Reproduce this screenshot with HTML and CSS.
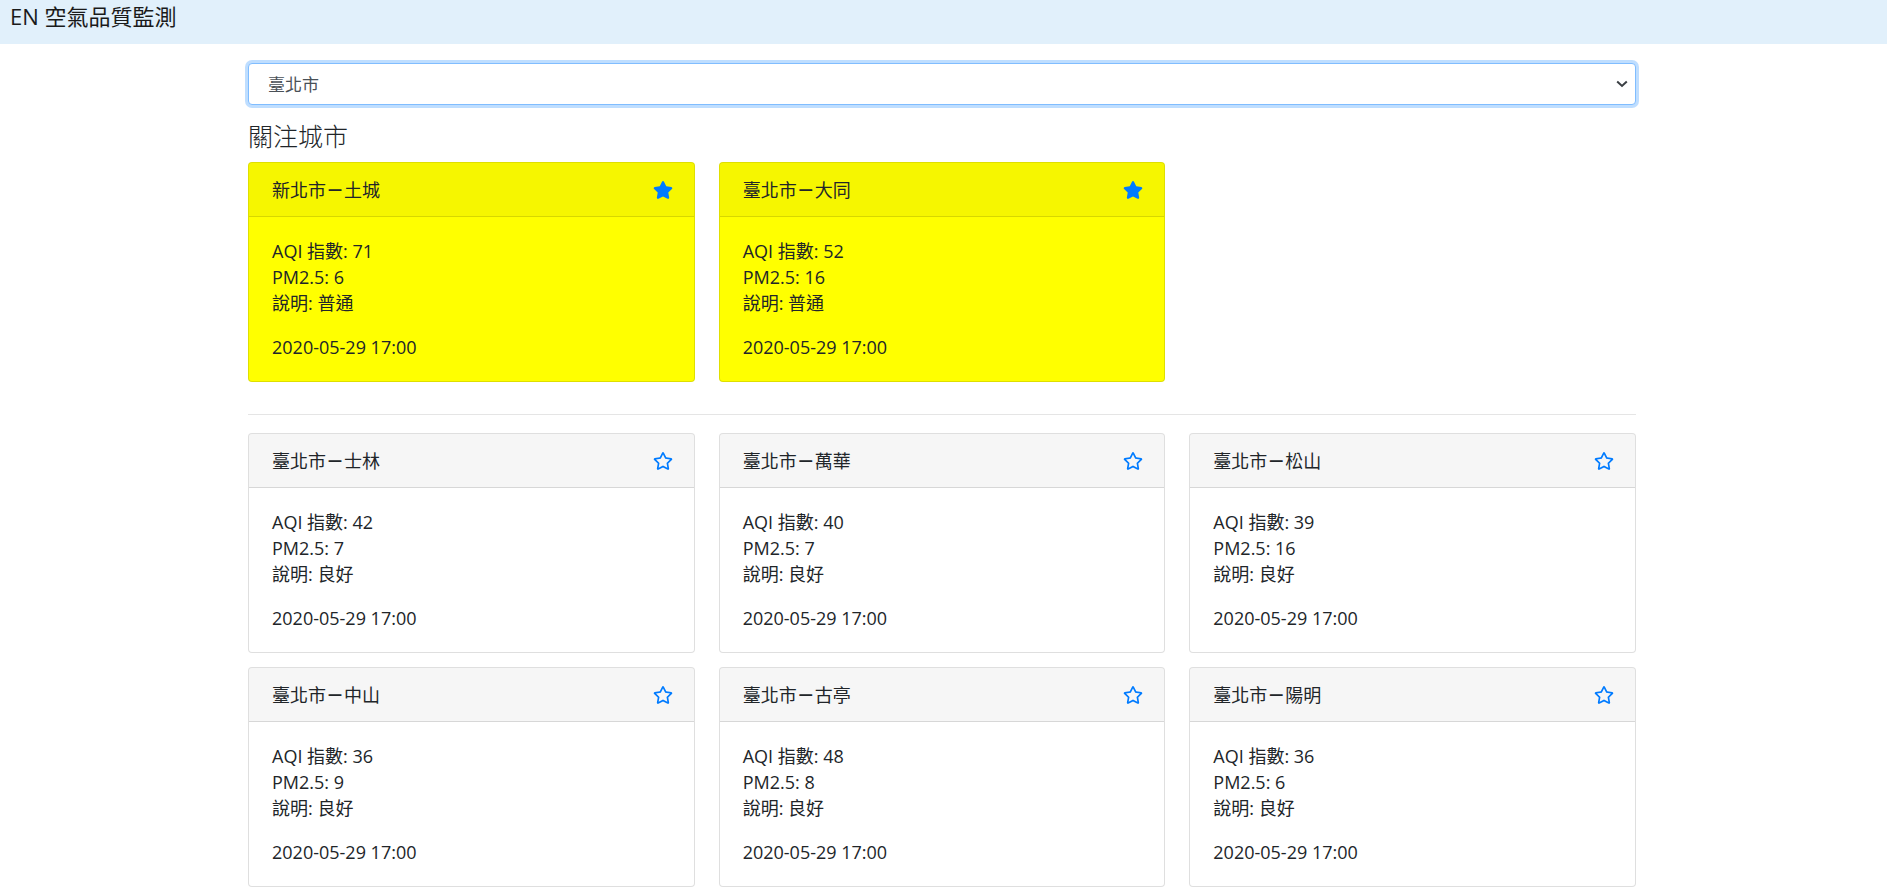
FILE: index.html
```html
<!DOCTYPE html>
<html lang="zh-Hant">
<head>
<meta charset="utf-8">
<title>空氣品質監測</title>
<link rel="stylesheet" href="styles.css">
</head>
<body>
<header class="navbar">EN 空氣品質監測</header>
<main class="container">
  <div class="select-wrap">
    <select class="city-select">
      <option>臺北市</option>
      <option>新北市</option>
    </select>
    <svg class="chevron" width="12" height="8" viewBox="0 0 12 8"><polyline points="1.2,1.5 6,6 10.8,1.5" fill="none" stroke="#3a3f44" stroke-width="2"/></svg>
  </div>
  <h2 class="section-title">關注城市</h2>
  <div class="card-grid">
    <div class="card card-fav">
      <div class="card-header"><span>新北市<span class="dash">－</span>土城</span><svg class="star" viewBox="0 0 576 512"><path d="M259.3 17.8L194 150.2 47.9 171.5c-26.2 3.8-36.7 36.1-17.7 54.6l105.7 103-25 145.5c-4.5 26.3 23.2 46 46.4 33.7L288 439.6l130.7 68.7c23.2 12.2 50.9-7.4 46.4-33.7l-25-145.5 105.7-103c19-18.5 8.5-50.8-17.7-54.6L382 150.2 316.7 17.8c-11.7-23.6-45.6-23.9-57.4 0z"/></svg></div>
      <div class="card-body">
        <p>AQI 指數: 71<br>PM2.5: 6<br>說明: 普通</p>
        <p>2020-05-29 17:00</p>
      </div>
    </div>
    <div class="card card-fav">
      <div class="card-header"><span>臺北市<span class="dash">－</span>大同</span><svg class="star" viewBox="0 0 576 512"><path d="M259.3 17.8L194 150.2 47.9 171.5c-26.2 3.8-36.7 36.1-17.7 54.6l105.7 103-25 145.5c-4.5 26.3 23.2 46 46.4 33.7L288 439.6l130.7 68.7c23.2 12.2 50.9-7.4 46.4-33.7l-25-145.5 105.7-103c19-18.5 8.5-50.8-17.7-54.6L382 150.2 316.7 17.8c-11.7-23.6-45.6-23.9-57.4 0z"/></svg></div>
      <div class="card-body">
        <p>AQI 指數: 52<br>PM2.5: 16<br>說明: 普通</p>
        <p>2020-05-29 17:00</p>
      </div>
    </div>
  </div>
  <hr class="divider">
  <div class="card-grid">
    <div class="card">
      <div class="card-header"><span>臺北市<span class="dash">－</span>士林</span><svg class="star" viewBox="0 0 576 512"><path d="M528.1 171.5L382 150.2 316.7 17.8c-11.7-23.6-45.6-23.9-57.4 0L194 150.2 47.9 171.5c-26.2 3.8-36.7 36.1-17.7 54.6l105.7 103-25 145.5c-4.5 26.3 23.2 46 46.4 33.7L288 439.6l130.7 68.7c23.2 12.2 50.9-7.4 46.4-33.7l-25-145.5 105.7-103c19-18.5 8.5-50.8-17.7-54.6zM388.6 312.3l23.7 138.4L288 385.4l-124.3 65.3 23.7-138.4-100.6-98 139-20.2 62.2-126 62.2 126 139 20.2-100.6 98z"/></svg></div>
      <div class="card-body">
        <p>AQI 指數: 42<br>PM2.5: 7<br>說明: 良好</p>
        <p>2020-05-29 17:00</p>
      </div>
    </div>
    <div class="card">
      <div class="card-header"><span>臺北市<span class="dash">－</span>萬華</span><svg class="star" viewBox="0 0 576 512"><path d="M528.1 171.5L382 150.2 316.7 17.8c-11.7-23.6-45.6-23.9-57.4 0L194 150.2 47.9 171.5c-26.2 3.8-36.7 36.1-17.7 54.6l105.7 103-25 145.5c-4.5 26.3 23.2 46 46.4 33.7L288 439.6l130.7 68.7c23.2 12.2 50.9-7.4 46.4-33.7l-25-145.5 105.7-103c19-18.5 8.5-50.8-17.7-54.6zM388.6 312.3l23.7 138.4L288 385.4l-124.3 65.3 23.7-138.4-100.6-98 139-20.2 62.2-126 62.2 126 139 20.2-100.6 98z"/></svg></div>
      <div class="card-body">
        <p>AQI 指數: 40<br>PM2.5: 7<br>說明: 良好</p>
        <p>2020-05-29 17:00</p>
      </div>
    </div>
    <div class="card">
      <div class="card-header"><span>臺北市<span class="dash">－</span>松山</span><svg class="star" viewBox="0 0 576 512"><path d="M528.1 171.5L382 150.2 316.7 17.8c-11.7-23.6-45.6-23.9-57.4 0L194 150.2 47.9 171.5c-26.2 3.8-36.7 36.1-17.7 54.6l105.7 103-25 145.5c-4.5 26.3 23.2 46 46.4 33.7L288 439.6l130.7 68.7c23.2 12.2 50.9-7.4 46.4-33.7l-25-145.5 105.7-103c19-18.5 8.5-50.8-17.7-54.6zM388.6 312.3l23.7 138.4L288 385.4l-124.3 65.3 23.7-138.4-100.6-98 139-20.2 62.2-126 62.2 126 139 20.2-100.6 98z"/></svg></div>
      <div class="card-body">
        <p>AQI 指數: 39<br>PM2.5: 16<br>說明: 良好</p>
        <p>2020-05-29 17:00</p>
      </div>
    </div>
    <div class="card">
      <div class="card-header"><span>臺北市<span class="dash">－</span>中山</span><svg class="star" viewBox="0 0 576 512"><path d="M528.1 171.5L382 150.2 316.7 17.8c-11.7-23.6-45.6-23.9-57.4 0L194 150.2 47.9 171.5c-26.2 3.8-36.7 36.1-17.7 54.6l105.7 103-25 145.5c-4.5 26.3 23.2 46 46.4 33.7L288 439.6l130.7 68.7c23.2 12.2 50.9-7.4 46.4-33.7l-25-145.5 105.7-103c19-18.5 8.5-50.8-17.7-54.6zM388.6 312.3l23.7 138.4L288 385.4l-124.3 65.3 23.7-138.4-100.6-98 139-20.2 62.2-126 62.2 126 139 20.2-100.6 98z"/></svg></div>
      <div class="card-body">
        <p>AQI 指數: 36<br>PM2.5: 9<br>說明: 良好</p>
        <p>2020-05-29 17:00</p>
      </div>
    </div>
    <div class="card">
      <div class="card-header"><span>臺北市<span class="dash">－</span>古亭</span><svg class="star" viewBox="0 0 576 512"><path d="M528.1 171.5L382 150.2 316.7 17.8c-11.7-23.6-45.6-23.9-57.4 0L194 150.2 47.9 171.5c-26.2 3.8-36.7 36.1-17.7 54.6l105.7 103-25 145.5c-4.5 26.3 23.2 46 46.4 33.7L288 439.6l130.7 68.7c23.2 12.2 50.9-7.4 46.4-33.7l-25-145.5 105.7-103c19-18.5 8.5-50.8-17.7-54.6zM388.6 312.3l23.7 138.4L288 385.4l-124.3 65.3 23.7-138.4-100.6-98 139-20.2 62.2-126 62.2 126 139 20.2-100.6 98z"/></svg></div>
      <div class="card-body">
        <p>AQI 指數: 48<br>PM2.5: 8<br>說明: 良好</p>
        <p>2020-05-29 17:00</p>
      </div>
    </div>
    <div class="card">
      <div class="card-header"><span>臺北市<span class="dash">－</span>陽明</span><svg class="star" viewBox="0 0 576 512"><path d="M528.1 171.5L382 150.2 316.7 17.8c-11.7-23.6-45.6-23.9-57.4 0L194 150.2 47.9 171.5c-26.2 3.8-36.7 36.1-17.7 54.6l105.7 103-25 145.5c-4.5 26.3 23.2 46 46.4 33.7L288 439.6l130.7 68.7c23.2 12.2 50.9-7.4 46.4-33.7l-25-145.5 105.7-103c19-18.5 8.5-50.8-17.7-54.6zM388.6 312.3l23.7 138.4L288 385.4l-124.3 65.3 23.7-138.4-100.6-98 139-20.2 62.2-126 62.2 126 139 20.2-100.6 98z"/></svg></div>
      <div class="card-body">
        <p>AQI 指數: 36<br>PM2.5: 6<br>說明: 良好</p>
        <p>2020-05-29 17:00</p>
      </div>
    </div>
  </div>
</main>
</body>
</html>
```

FILE: styles.css
```css
* { box-sizing: border-box; }

html, body {
  margin: 0;
  padding: 0;
  background: #fff;
}

body {
  font-family: "Open Sans", "Noto Sans CJK TC", sans-serif;
  font-size: 18px;
  line-height: 26px;
  color: #212529;
}

.navbar {
  height: 44px;
  background: #e1f0fb;
  padding: 0 10px;
  font-size: 22px;
  line-height: 32px;
  color: #1a1a1a;
}

.container {
  width: 1388px;
  margin: 0 0 0 248px;
  padding-top: 19px;
}

.select-wrap {
  position: relative;
}

.city-select {
  display: block;
  width: 100%;
  height: 42px;
  margin: 0;
  padding: 0 40px 0 19px;
  border: 1px solid #80bdff;
  border-radius: 4px;
  box-shadow: 0 0 0 3px rgba(0, 123, 255, 0.25);
  background: #fff;
  color: #495057;
  font-family: "Open Sans", "Noto Sans CJK TC", sans-serif;
  font-size: 17px;
  -webkit-appearance: none;
  appearance: none;
  outline: none;
}

.chevron {
  position: absolute;
  right: 8px;
  top: 17px;
  pointer-events: none;
}

.section-title {
  margin: 16px 0 11px;
  font-size: 25px;
  line-height: 30px;
  font-weight: 300;
  color: #212529;
}

.card-grid {
  display: grid;
  grid-template-columns: repeat(3, 1fr);
  column-gap: 24px;
  row-gap: 14px;
}

.card {
  border: 1px solid rgba(0, 0, 0, 0.125);
  border-radius: 4px;
  background: #fff;
  overflow: hidden;
}

.card-fav {
  background: #ffff00;
}

.card-header {
  display: flex;
  align-items: center;
  justify-content: space-between;
  height: 54px;
  padding: 0 21px 0 23px;
  background: rgba(0, 0, 0, 0.035);
  border-bottom: 1px solid rgba(0, 0, 0, 0.125);
}

.dash {
  font-weight: 700;
}

.star {
  width: 20px;
  height: 18px;
  fill: #007bff;
}

.card-body {
  padding: 21px 23px 21px;
}

.card-body p {
  margin: 0 0 18px;
}

.card-body p:last-child {
  margin-bottom: 0;
}

.divider {
  margin: 32px 0 18px;
  border: 0;
  border-top: 1px solid rgba(0, 0, 0, 0.1);
  height: 0;
}
```
